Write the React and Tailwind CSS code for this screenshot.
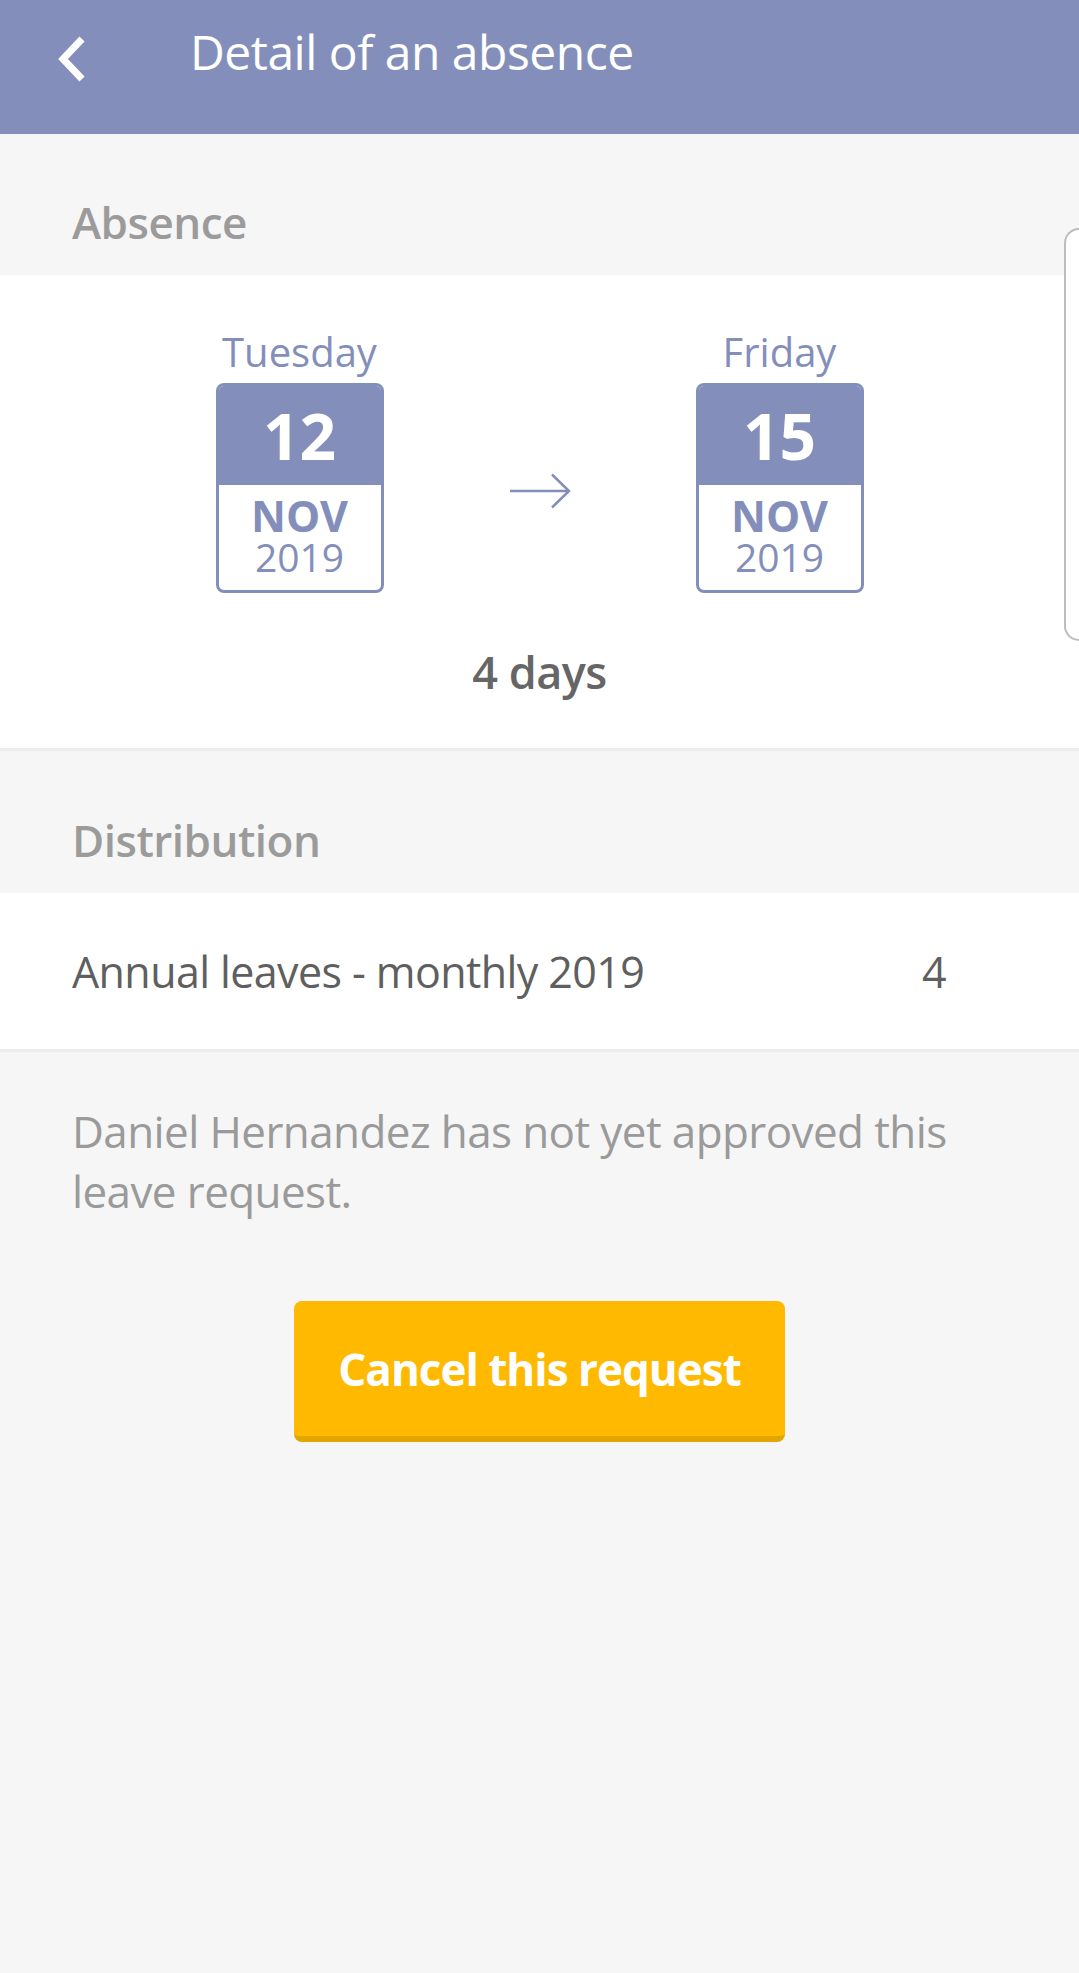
import React from "react";

function DateCard({ weekday, day, month, year }) {
  return (
    <div className="flex w-[168px] flex-col items-center">
      <div className="text-[40px] leading-none text-[#838fba]">{weekday}</div>
      <div className="mt-[11px] flex h-[210px] w-[168px] flex-col overflow-hidden rounded-[8px] border-[3px] border-[#838fba] bg-white">
        <div className="flex h-[99px] items-center justify-center bg-[#838fba] text-[64px] font-bold leading-none text-white">
          {day}
        </div>
        <div className="flex flex-1 flex-col items-center pt-[11px] text-[#838fba]">
          <span className="text-[43px] font-bold leading-[40px]">{month}</span>
          <span className="mt-[3px] text-[39px] leading-[36px]">{year}</span>
        </div>
      </div>
    </div>
  );
}

export default function App() {
  return (
    <div className="relative min-h-screen bg-[#f6f6f6] font-['Open_Sans',sans-serif]">
      {/* Toolbar */}
      <div className="flex h-[134px] items-start bg-[#838fba]">
        <svg className="ml-[54px] mt-[35px]" width="32" height="48" viewBox="0 0 32 48">
          <polyline
            points="28,4 9,24 28,44"
            fill="none"
            stroke="white"
            strokeWidth="7"
            strokeLinejoin="miter"
          />
        </svg>
        <h1 className="ml-[104px] mt-[28px] text-[48px] leading-none tracking-[-0.5px] text-white">
          Detail of an absence
        </h1>
      </div>

      {/* Absence */}
      <div className="h-[141px] pl-[72px] pt-[66px] text-[44px] font-semibold leading-none tracking-[-0.5px] text-[#9b9b9b]">
        Absence
      </div>
      <div className="flex h-[476px] flex-col items-center border-b-[3px] border-[#ececec] bg-white pt-[57px]">
        <div className="flex">
          <DateCard weekday="Tuesday" day="12" month="NOV" year="2019" />
          <div className="flex w-[312px] justify-center pt-[141px]">
            <svg width="62" height="36" viewBox="0 0 62 36">
              <path
                d="M1 18 H60 M43 1.5 L60 18 L43 34.5"
                fill="none"
                stroke="#838fba"
                strokeWidth="2.5"
              />
            </svg>
          </div>
          <DateCard weekday="Friday" day="15" month="NOV" year="2019" />
        </div>
        <div className="mt-[56px] text-[45px] font-semibold leading-none tracking-[-0.5px] text-[#666666]">
          4 days
        </div>
      </div>

      {/* Distribution */}
      <div className="h-[142px] pl-[72px] pt-[67px] text-[44px] font-semibold leading-none tracking-[-0.5px] text-[#9b9b9b]">
        Distribution
      </div>
      <div className="flex h-[159px] items-center justify-between border-b-[3px] border-[#ececec] bg-white pl-[72px] pr-[133px] text-[43px] leading-none tracking-[-0.6px] text-[#5f5f5f]">
        <span>Annual leaves - monthly 2019</span>
        <span>4</span>
      </div>

      {/* Status */}
      <p className="px-[72px] pt-[49px] text-[44px] leading-[60px] tracking-[-0.6px] text-[#9a9a9a]">
        Daniel Hernandez has not yet approved this leave request.
      </p>
      <div className="mt-[80px] flex justify-center">
        <button className="flex h-[141px] w-[491px] items-center justify-center rounded-[8px] border-b-[6px] border-[#e3a500] bg-[#ffb900] text-[44px] font-bold leading-none tracking-[-1px] text-white">
          Cancel this request
        </button>
      </div>

      {/* Side sheet edge */}
      <div className="absolute left-[1064px] top-[228px] h-[413px] w-[15px] rounded-l-[22px] border-2 border-r-0 border-[#bdbdbd] bg-white" />
    </div>
  );
}
